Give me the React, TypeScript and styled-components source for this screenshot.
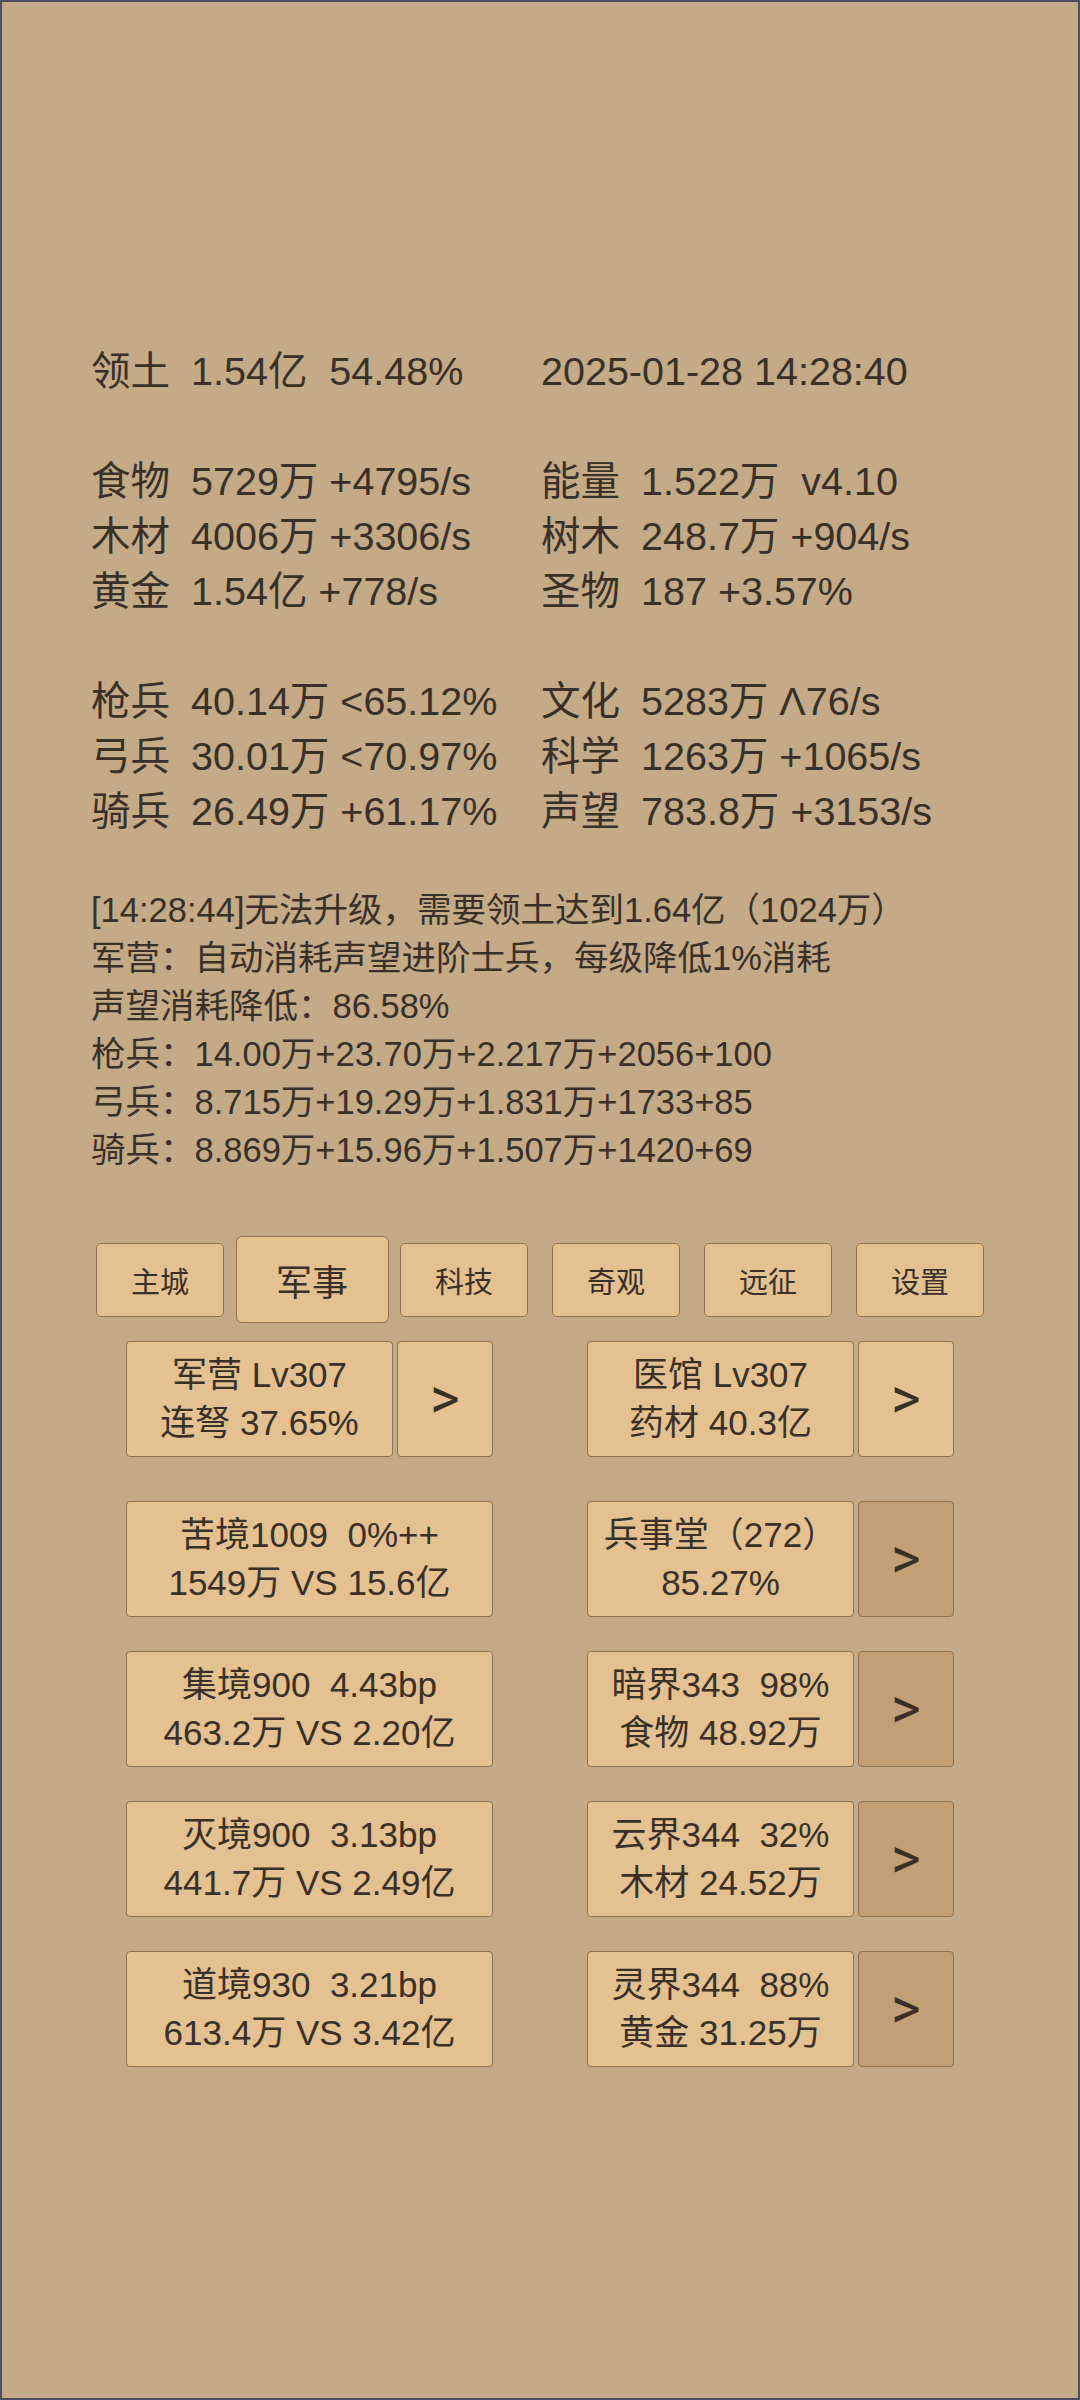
import React from "react";
import styled, { createGlobalStyle } from "styled-components";

const Global = createGlobalStyle`
  html, body { margin: 0; padding: 0; }
  body {
    background: #c4aa87;
    font-family: "Liberation Sans", "Noto Sans CJK SC", sans-serif;
    color: #3a3028;
  }
  * { box-sizing: border-box; }
`;

const Page = styled.div`
  min-height: 100vh;
  border: 2px solid #4c5263;
  background: #c4aa87;
  display: flex;
  flex-direction: column;
  padding-top: 342px;
`;

const Stats = styled.div`
  margin-left: 89px;
  display: flex;
  flex-direction: column;
  gap: 55px;
`;

const StatGroup = styled.div`
  display: grid;
  grid-template-columns: 450px 1fr;
  font-size: 39.5px;
  line-height: 55px;
`;

const StatCell = styled.div`
  display: flex;
  gap: 21px;
  white-space: pre;
`;

const Label = styled.span``;
const Value = styled.span``;

const Log = styled.div`
  margin-top: 47px;
  margin-left: 89px;
  font-size: 34.5px;
  line-height: 48px;
  white-space: pre;
`;

const Tabs = styled.div`
  margin-top: 62px;
  display: grid;
  grid-template-columns: repeat(6, 152px);
  justify-content: center;
  justify-items: center;
  align-items: center;
  height: 87px;
`;

const Tab = styled.div<{ $active?: boolean }>`
  width: ${(p) => (p.$active ? 153 : 128)}px;
  height: ${(p) => (p.$active ? 87 : 74)}px;
  font-size: ${(p) => (p.$active ? 36 : 29)}px;
  border-radius: ${(p) => (p.$active ? 6 : 5)}px;
  background: #e3c190;
  border: 1.5px solid #8e7252;
  display: flex;
  align-items: center;
  justify-content: center;
`;

const Buildings = styled.div`
  margin-top: 18px;
  display: grid;
  grid-template-columns: 367px 367px;
  justify-content: center;
  column-gap: 94px;
  row-gap: 34px;
`;

const Slot = styled.div<{ $first?: boolean }>`
  display: flex;
  gap: 4px;
  height: 116px;
  margin-bottom: ${(p) => (p.$first ? 10 : 0)}px;
`;

const Card = styled.div`
  flex: 1;
  background: #e3c190;
  border: 1.5px solid #8e7252;
  border-radius: 4px;
  display: flex;
  flex-direction: column;
  align-items: center;
  justify-content: center;
  font-size: 35px;
  line-height: 48px;
  white-space: pre;
`;

const Arrow = styled.div<{ $dim?: boolean }>`
  width: 96px;
  flex: none;
  background: ${(p) => (p.$dim ? "#c29f75" : "#e3c190")};
  border: 1.5px solid #8e7252;
  border-radius: 4px;
  display: flex;
  align-items: center;
  justify-content: center;
  font-family: Roboto, sans-serif;
  font-size: 57px;
  font-weight: 400;
  line-height: 1;
  padding-bottom: 2px;
`;

const statGroups: [string, string][][] = [
  [["领土", "1.54亿  54.48%"], ["", "2025-01-28 14:28:40"]],
  [
    ["食物", "5729万 +4795/s"], ["能量", "1.522万  v4.10"],
    ["木材", "4006万 +3306/s"], ["树木", "248.7万 +904/s"],
    ["黄金", "1.54亿 +778/s"], ["圣物", "187 +3.57%"],
  ],
  [
    ["枪兵", "40.14万 <65.12%"], ["文化", "5283万 Λ76/s"],
    ["弓兵", "30.01万 <70.97%"], ["科学", "1263万 +1065/s"],
    ["骑兵", "26.49万 +61.17%"], ["声望", "783.8万 +3153/s"],
  ],
];

const logLines = [
  "[14:28:44]无法升级，需要领土达到1.64亿（1024万）",
  "军营：自动消耗声望进阶士兵，每级降低1%消耗",
  "声望消耗降低：86.58%",
  "枪兵：14.00万+23.70万+2.217万+2056+100",
  "弓兵：8.715万+19.29万+1.831万+1733+85",
  "骑兵：8.869万+15.96万+1.507万+1420+69",
];

const tabs = ["主城", "军事", "科技", "奇观", "远征", "设置"];

type SlotData = { lines: [string, string]; arrow?: "on" | "dim" };

const slots: SlotData[] = [
  { lines: ["军营 Lv307", "连弩 37.65%"], arrow: "on" },
  { lines: ["医馆 Lv307", "药材 40.3亿"], arrow: "on" },
  { lines: ["苦境1009  0%++", "1549万 VS 15.6亿"] },
  { lines: ["兵事堂（272）", "85.27%"], arrow: "dim" },
  { lines: ["集境900  4.43bp", "463.2万 VS 2.20亿"] },
  { lines: ["暗界343  98%", "食物 48.92万"], arrow: "dim" },
  { lines: ["灭境900  3.13bp", "441.7万 VS 2.49亿"] },
  { lines: ["云界344  32%", "木材 24.52万"], arrow: "dim" },
  { lines: ["道境930  3.21bp", "613.4万 VS 3.42亿"] },
  { lines: ["灵界344  88%", "黄金 31.25万"], arrow: "dim" },
];

export default function App() {
  return (
    <>
      <Global />
      <Page>
        <Stats>
          {statGroups.map((g, gi) => (
            <StatGroup key={gi}>
              {g.map(([l, v], i) => (
                <StatCell key={i}>
                  {l && <Label>{l}</Label>}
                  <Value>{v}</Value>
                </StatCell>
              ))}
            </StatGroup>
          ))}
        </Stats>
        <Log>
          {logLines.map((t, i) => (
            <div key={i}>{t}</div>
          ))}
        </Log>
        <Tabs>
          {tabs.map((t) => (
            <Tab key={t} $active={t === "军事"}>
              {t}
            </Tab>
          ))}
        </Tabs>
        <Buildings>
          {slots.map((s, i) => (
            <Slot key={i} $first={i < 2}>
              <Card>
                <div>{s.lines[0]}</div>
                <div>{s.lines[1]}</div>
              </Card>
              {s.arrow && <Arrow $dim={s.arrow === "dim"}>&gt;</Arrow>}
            </Slot>
          ))}
        </Buildings>
      </Page>
    </>
  );
}
